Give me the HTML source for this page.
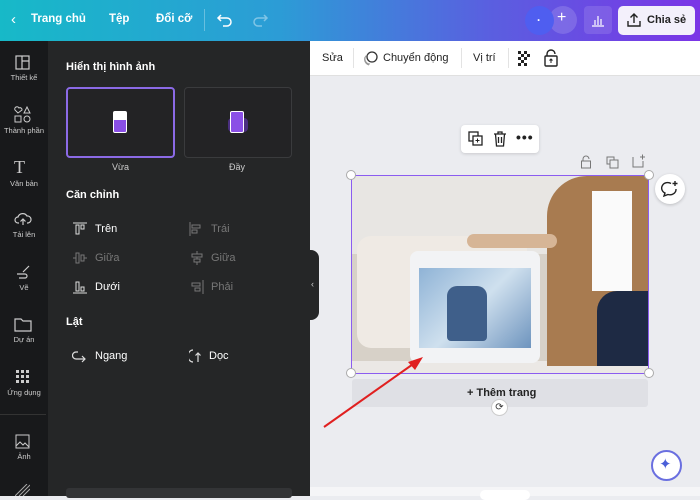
<!DOCTYPE html><html><head><meta charset="utf-8"><style>
*{margin:0;padding:0;box-sizing:border-box}
body{width:700px;height:496px;overflow:hidden;font-family:"Liberation Sans",sans-serif;background:#ebecf0;position:relative}
.a{position:absolute}
.top{left:0;top:0;width:700px;height:41px;background:linear-gradient(90deg,#17b9c8 0%,#2c9cd6 40%,#5a5fe0 70%,#7b35e6 100%)}
.tw{color:#fff;font-size:11.5px;font-weight:bold}
.rail{left:0;top:41px;width:48px;height:455px;background:#18191b}
.rl{color:#ccc;font-size:7.5px;text-align:center;width:48px;left:0}
.panel{left:48px;top:41px;width:262px;height:455px;background:#252627}
.pw{color:#fff;font-size:11px}
.pg{color:#777;font-size:11px}
</style></head><body>
<div class="a top"></div>
<div class="a tw" style="left:11px;top:11px;font-size:15px;font-weight:normal">&#8249;</div>
<div class="a tw" style="left:31px;top:13px">Trang chủ</div>
<div class="a tw" style="left:109px;top:13px">Tệp</div>
<div class="a tw" style="left:156px;top:13px">Đổi cỡ</div>
<div class="a" style="left:204px;top:9px;width:1px;height:22px;background:rgba(255,255,255,.3)"></div>
<svg class="a" style="left:216px;top:11px" width="18" height="18" viewBox="0 0 18 18"><path d="M5 4L2 7l3 3M2 7h9a4 4 0 010 8H7" stroke="#fff" stroke-width="1.5" fill="none"/></svg>
<svg class="a" style="left:251px;top:11px" width="18" height="18" viewBox="0 0 18 18"><path d="M13 4l3 3-3 3M16 7H7a4 4 0 000 8h4" stroke="rgba(255,255,255,.4)" stroke-width="1.5" fill="none"/></svg>
<div class="a" style="left:549px;top:6px;width:28px;height:28px;border-radius:50%;background:rgba(255,255,255,.15)"></div>
<div class="a" style="left:525px;top:6px;width:29px;height:29px;border-radius:50%;background:#4f5ef0"></div>
<div class="a tw" style="left:537px;top:12px">.</div>
<div class="a tw" style="left:557px;top:9px;font-size:16px;font-weight:normal">+</div>
<div class="a" style="left:584px;top:6px;width:28px;height:28px;border-radius:4px;background:rgba(255,255,255,.12)"></div>
<svg class="a" style="left:590px;top:12px" width="16" height="16"><path d="M2 14h12M5 13V8M8 13V4M11 13V7" stroke="#fff" stroke-width="1.2"/></svg>
<div class="a" style="left:618px;top:6px;width:77px;height:29px;border-radius:5px;background:#f3f0fb"></div>
<svg class="a" style="left:626px;top:12px" width="16" height="16"><path d="M8 11V2M4.5 5.5L8 2l3.5 3.5M2 9v5h12V9" stroke="#222" stroke-width="1.4" fill="none"/></svg>
<div class="a" style="left:647px;top:14px;font-size:11px;font-weight:bold;color:#222;white-space:nowrap">Chia sẻ</div>

<div class="a rail"></div>
<svg class="a" style="left:15px;top:55px" width="16" height="16"><rect x="1" y="1" width="13" height="13" stroke="#ccc" fill="none" stroke-width="1.2"/><path d="M7 1v13M7 6h7" stroke="#ccc" stroke-width="1.2"/></svg>
<div class="a rl" style="top:73px">Thiết kế</div>
<svg class="a" style="left:14px;top:106px" width="18" height="18"><path d="M4 7L1 4a2 2 0 014-2 2 2 0 013 2zM13 1l3 6h-6z" stroke="#ccc" fill="none"/><rect x="1" y="10" width="6" height="6" stroke="#ccc" fill="none"/><circle cx="13" cy="13" r="3" stroke="#ccc" fill="none"/></svg>
<div class="a rl" style="top:126px">Thành phần</div>
<div class="a" style="left:14px;top:157px;color:#ccc;font-size:18px;font-family:'Liberation Serif'">T</div>
<div class="a rl" style="top:179px">Văn bản</div>
<svg class="a" style="left:14px;top:211px" width="18" height="16"><path d="M5 12H4a3 3 0 010-6 5 5 0 019-1 3.5 3.5 0 011 7h-1M9 14V8M6.5 10.5L9 8l2.5 2.5" stroke="#ccc" fill="none" stroke-width="1.2"/></svg>
<div class="a rl" style="top:230px">Tải lên</div>
<svg class="a" style="left:15px;top:264px" width="16" height="16"><path d="M14 2l-6 6M2 10h8a2 2 0 010 4H4" stroke="#ccc" fill="none" stroke-width="1.2"/></svg>
<div class="a rl" style="top:283px">Vẽ</div>
<svg class="a" style="left:14px;top:317px" width="18" height="15"><path d="M1 2h6l2 2h8v10H1z" stroke="#ccc" fill="none" stroke-width="1.2"/></svg>
<div class="a rl" style="top:335px">Dự án</div>
<svg class="a" style="left:16px;top:370px" width="14" height="14"><g fill="#ccc"><rect x="0" y="0" width="3" height="3"/><rect x="5" y="0" width="3" height="3"/><rect x="10" y="0" width="3" height="3"/><rect x="0" y="5" width="3" height="3"/><rect x="5" y="5" width="3" height="3"/><rect x="10" y="5" width="3" height="3"/><rect x="0" y="10" width="3" height="3"/><rect x="5" y="10" width="3" height="3"/><rect x="10" y="10" width="3" height="3"/></g></svg>
<div class="a rl" style="top:388px">Ứng dụng</div>
<div class="a" style="left:0;top:414px;width:46px;height:1px;background:#333"></div>
<svg class="a" style="left:15px;top:434px" width="15" height="15"><rect x="1" y="1" width="13" height="13" stroke="#ccc" fill="none"/><path d="M1 12l4-4 3 3 2-2 4 4" stroke="#ccc" fill="none"/></svg>
<div class="a rl" style="top:452px">Ảnh</div>
<svg class="a" style="left:15px;top:484px" width="15" height="12"><path d="M0 12L12 0M4 12L15 1M8 12L15 5" stroke="#aaa"/></svg>

<div class="a panel"></div>
<div class="a pw" style="left:66px;top:61px;font-weight:bold">Hiển thị hình ảnh</div>
<div class="a" style="left:66px;top:87px;width:109px;height:71px;border:2px solid #8b6ae6;border-radius:4px;background:#232325"></div>
<div class="a" style="left:184px;top:87px;width:108px;height:71px;border:1px solid #3a3b3d;border-radius:4px;background:#232325"></div>
<div class="a" style="left:113px;top:111px;width:14px;height:22px;border:1.5px solid #fff;border-radius:2px;background:linear-gradient(#fff 0 40%,#8a4fe6 40%)"></div>
<div class="a" style="left:228px;top:118px;width:20px;height:14px;border-radius:4px;background:#4a2f80"></div>
<div class="a" style="left:230px;top:111px;width:14px;height:22px;border:1.5px solid #fff;border-radius:2px;background:#8a4fe6"></div>
<div class="a pw" style="left:112px;top:162px;font-size:9px;color:#ccc">Vừa</div>
<div class="a pw" style="left:229px;top:162px;font-size:9px;color:#ccc">Đầy</div>
<div class="a pw" style="left:66px;top:189px;font-weight:bold">Căn chỉnh</div>
<svg class="a" style="left:73px;top:222px" width="14" height="14"><path d="M0 1h14" stroke="#ddd"/><rect x="3" y="3" width="3" height="9" stroke="#ddd" fill="none"/><rect x="8" y="3" width="3" height="4" stroke="#ddd" fill="none"/></svg>
<div class="a pw" style="left:95px;top:223px">Trên</div>
<svg class="a" style="left:189px;top:222px" width="14" height="14"><path d="M1 0v14" stroke="#777"/><rect x="3" y="3" width="8" height="3" stroke="#777" fill="none"/><rect x="3" y="8" width="5" height="3" stroke="#777" fill="none"/></svg>
<div class="a pg" style="left:211px;top:223px">Trái</div>
<svg class="a" style="left:73px;top:251px" width="14" height="14"><path d="M0 7h3M11 7h3" stroke="#777"/><rect x="3" y="2" width="3" height="10" stroke="#777" fill="none"/><rect x="8" y="4" width="3" height="6" stroke="#777" fill="none"/></svg>
<div class="a pg" style="left:95px;top:252px">Giữa</div>
<svg class="a" style="left:190px;top:251px" width="14" height="14"><path d="M7 0v14" stroke="#777"/><rect x="2" y="3" width="10" height="3" stroke="#777" fill="#252627"/><rect x="4" y="8" width="6" height="3" stroke="#777" fill="#252627"/></svg>
<div class="a pg" style="left:211px;top:252px">Giữa</div>
<svg class="a" style="left:73px;top:280px" width="14" height="14"><path d="M0 13h14" stroke="#ddd"/><rect x="3" y="2" width="3" height="9" stroke="#ddd" fill="none"/><rect x="8" y="7" width="3" height="4" stroke="#ddd" fill="none"/></svg>
<div class="a pw" style="left:95px;top:281px">Dưới</div>
<svg class="a" style="left:190px;top:280px" width="14" height="14"><path d="M13 0v14" stroke="#777"/><rect x="2" y="3" width="8" height="3" stroke="#777" fill="none"/><rect x="5" y="8" width="5" height="3" stroke="#777" fill="none"/></svg>
<div class="a pg" style="left:211px;top:281px">Phải</div>
<div class="a pw" style="left:66px;top:316px;font-weight:bold">Lật</div>
<svg class="a" style="left:72px;top:349px" width="16" height="14"><path d="M6 3H4a3.5 3.5 0 000 7h9M10 7l3 3-3 3" stroke="#ddd" fill="none" stroke-width="1.2"/></svg>
<div class="a pw" style="left:95px;top:350px">Ngang</div>
<svg class="a" style="left:189px;top:348px" width="14" height="16"><path d="M4 2a5 6 0 000 12M9 14V5M6.5 7.5L9 5l2.5 2.5" stroke="#ddd" fill="none" stroke-width="1.2"/></svg>
<div class="a pw" style="left:209px;top:350px">Dọc</div>
<div class="a" style="left:66px;top:488px;width:226px;height:10px;background:#333436;border-radius:3px"></div>
<div class="a" style="left:308px;top:250px;width:11px;height:70px;background:#252627;border-radius:0 8px 8px 0"></div>
<div class="a" style="left:311px;top:279px;color:#ccc;font-size:9px">‹</div>

<div class="a" style="left:310px;top:41px;width:390px;height:35px;background:#fff;border-bottom:1px solid #e0e0e0"></div>
<div class="a" style="left:322px;top:52px;font-size:11px;color:#222">Sửa</div>
<div class="a" style="left:353px;top:48px;width:1px;height:20px;background:#e3e3e3"></div>
<svg class="a" style="left:363px;top:50px" width="16" height="16"><circle cx="9" cy="7" r="5" stroke="#333" fill="none" stroke-width="1.3"/><path d="M4 5a5 5 0 003 9M2 7a6 6 0 004 8" stroke="#999" fill="none"/></svg>
<div class="a" style="left:383px;top:52px;font-size:11px;color:#222">Chuyển động</div>
<div class="a" style="left:461px;top:48px;width:1px;height:20px;background:#e3e3e3"></div>
<div class="a" style="left:473px;top:52px;font-size:11px;color:#222">Vị trí</div>
<div class="a" style="left:508px;top:48px;width:1px;height:20px;background:#e3e3e3"></div>
<svg class="a" style="left:518px;top:51px" width="15" height="15"><g fill="#222"><rect x="0" y="0" width="3" height="3"/><rect x="6" y="0" width="3" height="3"/><rect x="3" y="3" width="3" height="3"/><rect x="9" y="3" width="3" height="3"/><rect x="0" y="6" width="3" height="3"/><rect x="6" y="6" width="3" height="3"/><rect x="3" y="9" width="3" height="3"/><rect x="0" y="12" width="3" height="3"/><rect x="6" y="12" width="3" height="3"/></g></svg>
<svg class="a" style="left:543px;top:49px" width="16" height="18"><path d="M4 7V5a4 4 0 018 0" stroke="#222" fill="none" stroke-width="1.4"/><rect x="2" y="7" width="12" height="10" rx="1" stroke="#222" fill="none" stroke-width="1.4"/><path d="M8 14v-4M6.5 11.5L8 10l1.5 1.5" stroke="#222"/></svg>

<div class="a" style="left:461px;top:125px;width:78px;height:28px;background:#fff;border-radius:4px;box-shadow:0 1px 3px rgba(0,0,0,.15)"></div>
<svg class="a" style="left:468px;top:131px" width="16" height="16"><rect x="1" y="1" width="9" height="9" stroke="#222" fill="none" stroke-width="1.3"/><rect x="5" y="5" width="9" height="9" fill="#fff" stroke="#222" stroke-width="1.3"/><path d="M9.5 7.5v4M7.5 9.5h4" stroke="#222"/></svg>
<svg class="a" style="left:493px;top:131px" width="14" height="16"><path d="M1 3h12M5 3V1h4v2M2.5 3l1 12h7l1-12M5.5 6v6M8.5 6v6" stroke="#222" fill="none" stroke-width="1.3"/></svg>
<div class="a" style="left:516px;top:129px;font-size:14px;color:#222;font-weight:bold;letter-spacing:1px">•••</div>
<svg class="a" style="left:580px;top:155px" width="12" height="14"><path d="M3 6V4a3 3 0 016 0" stroke="#777" fill="none"/><rect x="1.5" y="6" width="9" height="7" stroke="#777" fill="none"/></svg>
<svg class="a" style="left:606px;top:156px" width="13" height="13"><rect x="1" y="1" width="7" height="7" stroke="#777" fill="none"/><rect x="4" y="4" width="8" height="8" fill="#ebecf0" stroke="#777"/></svg>
<svg class="a" style="left:632px;top:154px" width="13" height="14"><path d="M1 3v10h10V7M8 3h5M10.5 0.5v5" stroke="#777" fill="none"/></svg>

<div class="a" style="left:352px;top:176px;width:296px;height:197px;background:#e8e6e3;overflow:hidden">
 <div class="a" style="left:0;top:78px;width:296px;height:110px;background:#d7d1c8"></div>
 <div class="a" style="left:0;top:185px;width:296px;height:12px;background:#ebe8e5"></div>
 <div class="a" style="left:5px;top:60px;width:170px;height:112px;background:#efeae4;border-radius:14px"></div>
 <div class="a" style="left:58px;top:75px;width:130px;height:112px;background:#f2f3f5;border-radius:8px"></div>
 <div class="a" style="left:67px;top:92px;width:112px;height:80px;background:linear-gradient(135deg,#8fb3d6,#cfe0ee 50%,#6e94be)"></div>
 <div class="a" style="left:95px;top:110px;width:40px;height:55px;background:#3f5f8a;border-radius:10px 10px 4px 4px"></div>
 <div class="a" style="left:195px;top:0;width:101px;height:190px;background:#a87b50;border-radius:40px 0 0 0"></div>
 <div class="a" style="left:240px;top:15px;width:40px;height:100px;background:#fafafa"></div>
 <div class="a" style="left:245px;top:115px;width:51px;height:75px;background:#1e2a44;border-radius:20px 0 0 0"></div>
 <div class="a" style="left:115px;top:58px;width:90px;height:14px;background:#d6b596;border-radius:7px"></div>
</div>
<div class="a" style="left:351px;top:175px;width:298px;height:199px;border:1.5px solid #8b5cf0"></div>
<div class="a" style="left:346px;top:170px;width:10px;height:10px;border-radius:50%;background:#fff;border:1px solid #aaa"></div>
<div class="a" style="left:644px;top:170px;width:10px;height:10px;border-radius:50%;background:#fff;border:1px solid #aaa"></div>
<div class="a" style="left:346px;top:368px;width:10px;height:10px;border-radius:50%;background:#fff;border:1px solid #aaa"></div>
<div class="a" style="left:644px;top:368px;width:10px;height:10px;border-radius:50%;background:#fff;border:1px solid #aaa"></div>
<div class="a" style="left:655px;top:174px;width:30px;height:30px;border-radius:50%;background:#fff;box-shadow:0 1px 3px rgba(0,0,0,.2)"></div>
<svg class="a" style="left:661px;top:180px" width="18" height="18"><path d="M10 3.5A6 5.5 0 104 13l-1 3 4-1.5A6 5.5 0 0015 9M14 1v5M11.5 3.5h5" stroke="#222" fill="none" stroke-width="1.4"/></svg>
<div class="a" style="left:352px;top:379px;width:296px;height:28px;background:#dfe0e5;border-radius:3px"></div>
<div class="a" style="left:467px;top:387px;font-size:11px;color:#222;font-weight:bold">+ Thêm trang</div>
<div class="a" style="left:491px;top:399px;width:17px;height:17px;border-radius:50%;background:#fff;border:1px solid #ccc;font-size:10px;text-align:center;line-height:15px;color:#333">⟳</div>
<svg class="a" style="left:320px;top:350px" width="110" height="80"><path d="M4 77L96 12" stroke="#e02020" stroke-width="2"/><path d="M103 7L88 12L95 20z" fill="#e02020"/></svg>
<div class="a" style="left:651px;top:450px;width:31px;height:31px;border-radius:50%;background:#fff;border:2px solid #6a6fe0"></div>
<div class="a" style="left:659px;top:455px;font-size:15px;color:#4a5fd8">✦</div>
<div class="a" style="left:310px;top:487px;width:390px;height:9px;background:#f5f5f7"></div>
<div class="a" style="left:480px;top:490px;width:50px;height:10px;border-radius:6px;background:#fff"></div>
</body></html>
